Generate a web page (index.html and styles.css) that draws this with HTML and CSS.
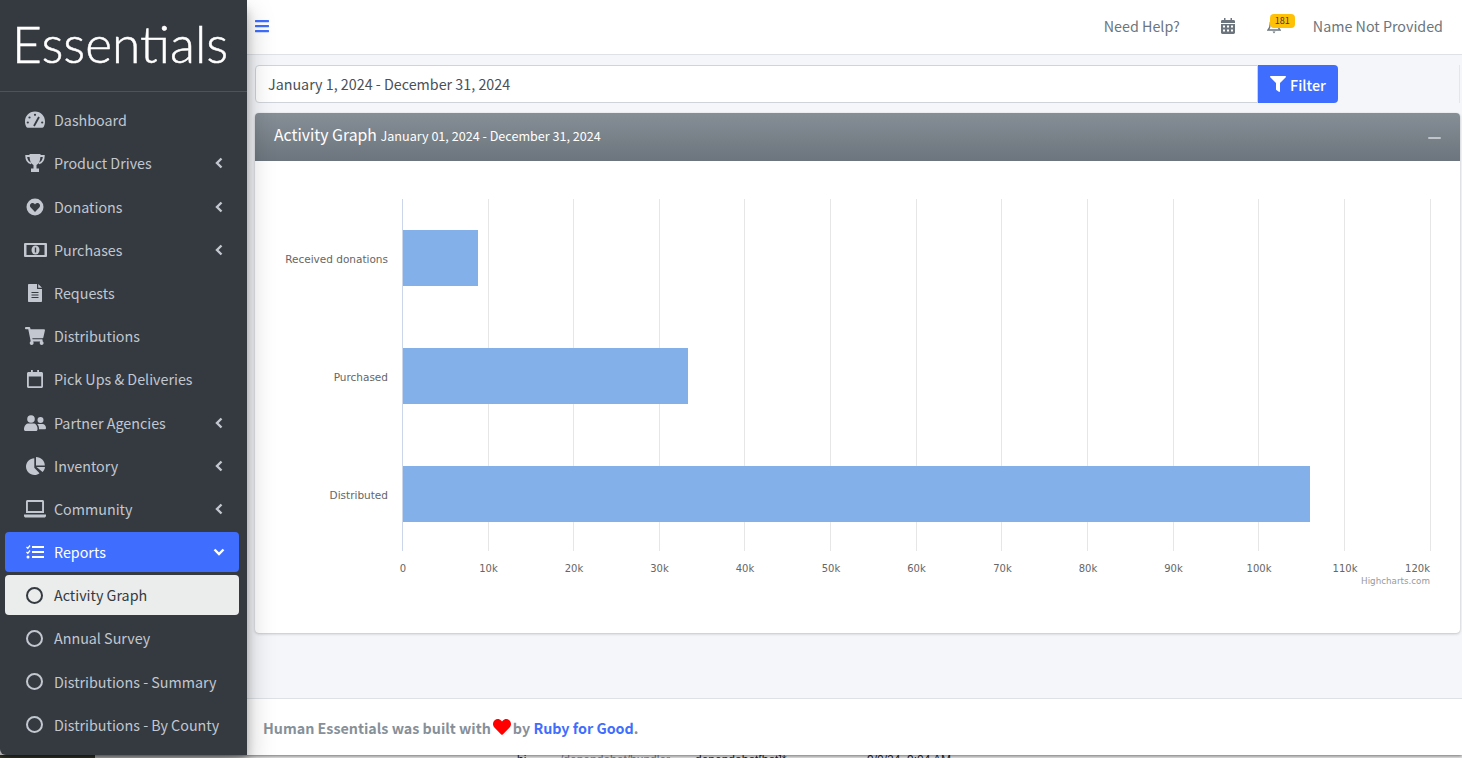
FILE: index.html
```html
<!DOCTYPE html>
<html lang="en">
<head>
<meta charset="UTF-8">
<meta name="viewport" content="width=device-width, initial-scale=1.0">
<title>Activity Graph</title>
<link rel="stylesheet" href="styles.css">
</head>
<body>

<div class="window">
    <aside class="sidebar">
        <div class="brand">Essentials</div>
        <ul class="nav">
            <li class="nav-item">
                <span class="nav-icon"><svg width="22" height="18" viewBox="0 0 22 18"><path fill="currentColor" d="M11 0.5C5 0.5 1 5 1 10.500c0 2 .5 4 1.400 5.500.3.5.8.8 1.400.8h14.400c.6 0 1.100-.3 1.400-.8.9-1.500 1.400-3.500 1.400-5.500C21 5 17 .5 11 .5z"/><g fill="#343a40"><circle cx="11" cy="3.800" r="1.100"/><circle cx="5.500" cy="6.500" r="1.100"/><circle cx="3.800" cy="11.500" r="1.100"/><circle cx="18.200" cy="11.500" r="1.100"/></g><path stroke="#343a40" stroke-width="1.800" d="M10 15l5-9"/></svg></span>
                <span>Dashboard</span>
            </li>
            <li class="nav-item">
                <span class="nav-icon"><svg width="20" height="18" viewBox="0 0 20 18"><path fill="none" stroke="currentColor" stroke-width="1.800" d="M5 2H1.200c0 4 1.500 6.500 5 7.500M15 2h3.800c0 4-1.500 6.500-5 7.500"/><path fill="currentColor" d="M4.500 0h11c0 6-1 9.500-4 11v3.500H14V18H6v-3.500h2.500V11c-3-1.500-4-5-4-11z"/></svg></span>
                <span>Product Drives</span>
                <svg class="chevron" width="8" height="12" viewBox="0 0 8 12"><path d="M6.500 1.500L2 6l4.500 4.500"/></svg>
            </li>
            <li class="nav-item">
                <span class="nav-icon"><svg width="18" height="18" viewBox="0 0 18 18"><circle cx="9" cy="9" r="8.500" fill="currentColor"/><path fill="#343a40" d="M9 14L4.700 9.500C3 7.500 4.500 4.800 6.800 5 8 5.100 8.600 5.800 9 6.500 9.400 5.800 10 5.100 11.200 5c2.300-.2 3.800 2.500 2.100 4.500z"/></svg></span>
                <span>Donations</span>
                <svg class="chevron" width="8" height="12" viewBox="0 0 8 12"><path d="M6.500 1.500L2 6l4.500 4.500"/></svg>
            </li>
            <li class="nav-item">
                <span class="nav-icon"><svg width="23" height="14" viewBox="0 0 23 14"><rect width="23" height="14" rx="1" fill="currentColor"/><rect x="2.500" y="2" width="18" height="10" fill="#343a40"/><ellipse cx="11.500" cy="7" rx="4" ry="4.500" fill="currentColor"/><rect x="10.800" y="4.500" width="1.400" height="5" fill="#343a40"/></svg></span>
                <span>Purchases</span>
                <svg class="chevron" width="8" height="12" viewBox="0 0 8 12"><path d="M6.500 1.500L2 6l4.500 4.500"/></svg>
            </li>
            <li class="nav-item">
                <span class="nav-icon"><svg width="14" height="18" viewBox="0 0 14 18"><path fill="currentColor" d="M1 0h8v4.500c0 .3.200.5.500.5H14v12c0 .6-.4 1-1 1H1c-.6 0-1-.4-1-1V1c0-.6.4-1 1-1zm9.200 0L14 3.800H10.200z"/><path stroke="#343a40" stroke-width="1.200" d="M3.500 8.500h7M3.500 11h7M3.500 13.500h7"/></svg></span>
                <span>Requests</span>
            </li>
            <li class="nav-item">
                <span class="nav-icon"><svg width="20" height="18" viewBox="0 0 576 512"><path fill="currentColor" d="M528.120 301.319l47.273-208C578.806 78.301 567.391 64 551.990 64H159.208l-9.166-44.810C147.758 8.021 137.930 0 126.529 0H24C10.745 0 0 10.745 0 24v16c0 13.255 10.745 24 24 24h69.883l70.248 343.435C147.325 417.100 136 435.222 136 456c0 30.928 25.072 56 56 56s56-25.072 56-56c0-15.674-6.447-29.835-16.824-40h209.647C430.447 426.165 424 440.326 424 456c0 30.928 25.072 56 56 56s56-25.072 56-56c0-22.172-12.888-41.332-31.579-50.405l5.517-24.276c3.413-15.018-8.002-29.319-23.403-29.319H218.117l-6.545-32h293.145c11.206 0 20.920-7.754 23.403-18.681z"/></svg></span>
                <span>Distributions</span>
            </li>
            <li class="nav-item">
                <span class="nav-icon"><svg width="16" height="18" viewBox="0 0 16 18"><path fill="currentColor" d="M1.500 2H4V0h1.800v2h4.400V0H12v2h2.500c.8 0 1.500.7 1.500 1.500v13c0 .8-.7 1.500-1.500 1.500h-13C.7 18 0 17.300 0 16.500v-13C0 2.700.7 2 1.500 2zm.3 4.500v9.500c0 .2.100.3.300.3h11.800c.2 0 .3-.1.300-.3V6.500z"/></svg></span>
                <span>Pick Ups &amp; Deliveries</span>
            </li>
            <li class="nav-item">
                <span class="nav-icon"><svg width="22" height="16" viewBox="0 0 22 16"><g fill="currentColor"><circle cx="7" cy="4" r="3.800"/><path d="M0 14c0-3.500 2.500-5.500 4.500-5.500h5C11.500 8.500 13.500 10.500 13.500 14v.5c0 .8-.7 1.500-1.500 1.500H1.500C.7 16 0 15.300 0 14.500z"/><circle cx="16.500" cy="5" r="3"/><path d="M14.200 9h4.300C20.500 9 22 10.800 22 13c0 .8-.5 1.300-1.300 1.300H15c0-2-.2-3.800-1.800-5.300z"/></g></svg></span>
                <span>Partner Agencies</span>
                <svg class="chevron" width="8" height="12" viewBox="0 0 8 12"><path d="M6.500 1.500L2 6l4.500 4.500"/></svg>
            </li>
            <li class="nav-item">
                <span class="nav-icon"><svg width="19" height="18" viewBox="0 0 19 18"><g fill="currentColor"><path d="M8.300 1.200C3.700 1.500 0 5 0 9.500 0 14.200 3.800 18 8.500 18c2 0 3.700-.7 5-1.800L8.300 10.800z"/><path d="M10 0v8.500h8.800C18.800 3.700 14.900 0 10 0z"/><path d="M10.500 10h8.500c-.2 2-1.100 3.800-2.500 5.100z"/></g></svg></span>
                <span>Inventory</span>
                <svg class="chevron" width="8" height="12" viewBox="0 0 8 12"><path d="M6.500 1.500L2 6l4.500 4.500"/></svg>
            </li>
            <li class="nav-item">
                <span class="nav-icon"><svg width="22" height="18" viewBox="0 0 22 18"><path fill="currentColor" d="M3.500 0h15c.8 0 1.500.7 1.500 1.500V13H2V1.500C2 .7 2.700 0 3.500 0zm.4 2v9h14.200V2zM0 14.500h22v1.200c0 1-.8 1.800-1.800 1.800H1.800C.8 17.500 0 16.700 0 15.700z"/></svg></span>
                <span>Community</span>
                <svg class="chevron" width="8" height="12" viewBox="0 0 8 12"><path d="M6.500 1.500L2 6l4.500 4.500"/></svg>
            </li>
            <li class="nav-item is-open">
                <span class="nav-icon"><svg width="18" height="14" viewBox="0 0 18 14"><path stroke="currentColor" stroke-width="2" d="M6 2h12M6 7h12M6 12h12"/><path fill="none" stroke="currentColor" stroke-width="1.300" d="M.5 2l1.300 1.300L4 .5M.5 7l1.300 1.300L4 5.500"/><circle cx="2" cy="12" r="1.500" fill="currentColor"/></svg></span>
                <span>Reports</span>
                <svg class="chevron" width="12" height="8" viewBox="0 0 12 8"><path d="M1.500 1.500L6 6l4.500-4.500"/></svg>
            </li>
            <li class="nav-item is-current">
                <span class="nav-icon"><span class="ring"></span></span>
                <span>Activity Graph</span>
            </li>
            <li class="nav-item">
                <span class="nav-icon"><span class="ring"></span></span>
                <span>Annual Survey</span>
            </li>
            <li class="nav-item">
                <span class="nav-icon"><span class="ring"></span></span>
                <span>Distributions - Summary</span>
            </li>
            <li class="nav-item">
                <span class="nav-icon"><span class="ring"></span></span>
                <span>Distributions - By County</span>
            </li>
        </ul>
    </aside>

    <div class="main">
        <header class="topbar">
            <svg class="menu-icon" width="14" height="16" viewBox="0 0 448 512"><path fill="currentColor" d="M16 132h416c8.837 0 16-7.163 16-16V76c0-8.837-7.163-16-16-16H16C7.163 60 0 67.163 0 76v40c0 8.837 7.163 16 16 16zm0 160h416c8.837 0 16-7.163 16-16v-40c0-8.837-7.163-16-16-16H16c-8.837 0-16 7.163-16 16v40c0 8.837 7.163 16 16 16zm0 160h416c8.837 0 16-7.163 16-16v-40c0-8.837-7.163-16-16-16H16c-8.837 0-16 7.163-16 16v40c0 8.837 7.163 16 16 16z"/></svg>
            <span class="help">Need Help?</span>
            <svg class="calendar" width="14" height="16" viewBox="0 0 14 16"><path fill="currentColor" d="M3 0h1.500v2h5V0H11v2h1.600c.8 0 1.400.6 1.400 1.400V5H0V3.400C0 2.600.6 2 1.400 2H3zM0 6h14v8.600c0 .8-.6 1.400-1.400 1.400H1.400C.6 16 0 15.400 0 14.600z"/><path fill="#fff" d="M2 7.500h2v2H2zM6 7.500h2v2H6zM10 7.500h2v2h-2zM2 11.500h2v2H2zM6 11.500h2v2H6zM10 11.500h2v2h-2z"/></svg>
            <span class="bell">
                <svg width="14" height="16" viewBox="0 0 14 16"><path fill="none" stroke="#6c757d" stroke-width="1.300" d="M7 1.500C4.500 1.500 3.200 3.500 3.200 6c0 3-1 4.800-2.200 6h12c-1.200-1.200-2.200-3-2.200-6 0-2.500-1.300-4.500-3.800-4.500z"/><path fill="#6c757d" d="M5.500 13.500h3L7 15.500z"/></svg>
                <span class="badge">181</span>
            </span>
            <span class="user">Name Not Provided</span>
        </header>

        <main class="content">
            <div class="filter-row">
                <div class="date-input">January 1, 2024 - December 31, 2024</div>
                <button class="filter-btn">
                    <svg width="16" height="16" viewBox="0 0 512 512"><path fill="currentColor" d="M487.976 0H24.028C2.710 0-8.047 25.866 7.058 40.971L192 225.941V432c0 7.831 3.821 15.170 10.237 19.662l80 55.980C298.020 518.690 320 507.493 320 487.980V225.941l184.947-184.970C520.021 25.896 509.338 0 487.976 0z"/></svg>
                    Filter
                </button>
            </div>

            <section class="card">
                <div class="card-header">
                    <h3 class="card-title">Activity Graph <small>January 01, 2024 - December 31, 2024</small></h3>
                    <span class="collapse-btn"></span>
                </div>
                <svg class="chart" width="1205" height="472" viewBox="0 0 1205 472">
                    <g class="grid">
                        <path d="M233.500 38v352M318.500 38v352M404.500 38v352M489.500 38v352M575.500 38v352M661.500 38v352M746.500 38v352M832.500 38v352M918.500 38v352M1003.500 38v352M1089.500 38v352M1175.500 38v352"/>
                    </g>
                    <path class="axis" d="M147.500 38v352"/>
                    <rect class="bar" x="148" y="69" width="75" height="56"/>
                    <rect class="bar" x="148" y="187" width="285" height="56"/>
                    <rect class="bar" x="148" y="305" width="907" height="56"/>
                    <g class="cat-labels">
                        <text x="133" y="102">Received donations</text>
                        <text x="133" y="220">Purchased</text>
                        <text x="133" y="338">Distributed</text>
                    </g>
                    <g class="val-labels">
                        <text x="148" y="411">0</text>
                        <text x="233.500" y="411">10k</text>
                        <text x="319" y="411">20k</text>
                        <text x="404.500" y="411">30k</text>
                        <text x="490" y="411">40k</text>
                        <text x="576" y="411">50k</text>
                        <text x="661.500" y="411">60k</text>
                        <text x="747.500" y="411">70k</text>
                        <text x="833" y="411">80k</text>
                        <text x="918.500" y="411">90k</text>
                        <text x="1004" y="411">100k</text>
                        <text x="1090" y="411">110k</text>
                        <text x="1175" y="411">120k</text>
                    </g>
                    <text class="credit" x="1175" y="423">Highcharts.com</text>
                </svg>
            </section>
        </main>

        <footer class="footer">
            <strong>Human Essentials was built with</strong>
            <svg class="heart" width="18" height="18" viewBox="0 0 512 512"><path fill="#f00" d="M462.300 62.600C407.500 15.900 326 24.300 275.700 76.200L256 96.500l-19.700-20.300C186.100 24.300 104.500 15.900 49.700 62.600c-62.800 53.600-66.100 149.800-9.900 207.900l193.500 199.800c12.500 12.900 32.800 12.900 45.300 0l193.500-199.800c56.300-58.100 53-154.300-9.800-207.900z"/></svg>
            <strong>by <a href="#">Ruby for Good</a>.</strong>
        </footer>
    </div>
</div>

<div class="behind">
    <span>bi</span>
    <span class="muted">/dependabot/bundler</span>
    <span>dependabot[bot]*</span>
    <span>9/0/24, 9:04 AM</span>
</div>

</body>
</html>
```

FILE: styles.css
```css
* {
    box-sizing: border-box;
}
html, body {
    height: 100%;
}
body {
    margin: 0;
    overflow: hidden;
    font-family: "Noto Sans CJK KR", "Noto Sans", sans-serif;
    font-size: 14.3px;
    color: #343a40;
    background-color: #ddd;
}
.window {
    display: flex;
    height: 755px;
    box-shadow: 0 1px 3px rgba(0, 0, 0, 0.5);
    position: relative;
}

/* sidebar */
.sidebar {
    width: 247px;
    flex-shrink: 0;
    background-color: #343a40;
    color: #c2c7d0;
    border-bottom-left-radius: 6px;
    box-shadow: 0 14px 28px rgba(0, 0, 0, 0.25), 0 10px 10px rgba(0, 0, 0, 0.22);
    position: relative;
    z-index: 2;
}
.brand {
    height: 92px;
    padding: 10px 0 0 12px;
    border-bottom: 1px solid #4b545c;
    font-family: "Lato", sans-serif;
    font-weight: 300;
    font-size: 51.5px;
    line-height: 66px;
    color: #fff;
    -webkit-text-stroke: 0.5px #fff;
}
.nav {
    list-style: none;
    margin: 0;
    padding: 8.2px 8px 0 5px;
    display: flex;
    flex-direction: column;
    gap: 3.2px;
}
.nav-item {
    display: flex;
    align-items: center;
    height: 40px;
    padding-left: 17px;
    border-radius: 4px;
    line-height: 24px;
}
.nav-icon {
    width: 26px;
    margin-right: 6px;
    display: flex;
    align-items: center;
    justify-content: center;
    flex-shrink: 0;
}
.chevron {
    margin-left: auto;
    margin-right: 16px;
    fill: none;
    stroke: currentColor;
    stroke-width: 2.4;
}
.is-open {
    background-color: #3f6efe;
    color: #fff;
}
.is-open .chevron {
    margin-right: 14px;
}
.is-current {
    background-color: #ebecec;
    color: #343a40;
}
.ring {
    width: 17px;
    height: 17px;
    margin-left: -1px;
    border: 2px solid currentColor;
    border-radius: 50%;
}

/* main column */
.main {
    flex: 1;
    min-width: 0;
    display: flex;
    flex-direction: column;
    background-color: #f4f6f9;
}
.topbar {
    height: 55px;
    flex-shrink: 0;
    display: flex;
    align-items: center;
    padding: 0 19px 3px 8px;
    background-color: #fff;
    border-bottom: 1px solid #dee2e6;
    color: #6c757d;
}
.menu-icon {
    color: #3f6efe;
}
.help {
    margin-left: auto;
}
.calendar {
    margin-left: 41px;
}
.bell {
    margin-left: 32px;
    position: relative;
    display: flex;
}
.badge {
    position: absolute;
    top: -4px;
    left: 3px;
    padding: 0 5px;
    height: 14px;
    border-radius: 4px;
    background-color: #ffc107;
    color: #343a40;
    font-size: 9px;
    line-height: 14px;
}
.user {
    margin-left: 32px;
}
.content {
    flex: 1;
    padding: 10px 2px 0 8px;
}
.filter-row {
    display: flex;
    height: 38px;
    border-right: 1px solid #e3e6ea;
}
.date-input {
    flex: 0 0 1003px;
    padding: 0 12px;
    border: 1px solid #ced4da;
    border-radius: 4px 0 0 4px;
    background-color: #fff;
    color: #495057;
    line-height: 36px;
}
.filter-btn {
    width: 80px;
    display: flex;
    align-items: center;
    justify-content: center;
    gap: 4px;
    padding: 0;
    border: none;
    border-radius: 0 4px 4px 0;
    background-color: #3f6efe;
    color: #fff;
    font: inherit;
    font-weight: 500;
}
.card {
    margin-top: 10px;
    height: 520px;
    border-radius: 4px;
    background-color: #fff;
    box-shadow: 0 0 1px rgba(0, 0, 0, 0.125), 0 1px 3px rgba(0, 0, 0, 0.2);
    overflow: hidden;
}
.card-header {
    height: 48px;
    display: flex;
    align-items: center;
    justify-content: space-between;
    padding: 0 19px 3px 19px;
    background: linear-gradient(#868e96, #6c757d);
    color: #fff;
}
.card-title {
    margin: 0;
    font-size: 15.8px;
    font-weight: 400;
    line-height: 24px;
}
.card-title small {
    font-size: 12.6px;
}
.collapse-btn {
    width: 13px;
    height: 2px;
    margin-top: 4px;
    background-color: #c0c5ca;
    border-radius: 1px;
}
.chart {
    display: block;
}
.grid path {
    stroke: #e6e6e6;
    fill: none;
}
.axis {
    stroke: #ccd6eb;
    fill: none;
}
.bar {
    fill: #84b0ea;
}
.chart text {
    font-family: "DejaVu Sans", sans-serif;
    font-size: 10px;
    fill: #666;
}
.chart .cat-labels text {
    font-size: 10.5px;
    text-anchor: end;
}
.val-labels text {
    text-anchor: middle;
}
.val-labels text:last-child {
    text-anchor: end;
}
.chart .credit {
    font-size: 8.75px;
    fill: #999;
    text-anchor: end;
}
.footer {
    height: 57px;
    flex-shrink: 0;
    display: flex;
    align-items: center;
    padding: 0 16px;
    background-color: #fff;
    border-top: 1px solid #dee2e6;
    color: #869099;
}
.footer a {
    color: #3f6efe;
    text-decoration: none;
}
.heart {
    margin: 0 2px;
}

/* what shows under the browser window */
.behind {
    height: 3px;
    display: grid;
    grid-template-columns: 43px 135px 172px auto;
    padding-left: 517px;
    overflow: hidden;
    background: linear-gradient(to right, #3f4233 95px, #e4e4e4 95px);
    font-family: "Liberation Sans", sans-serif;
    font-size: 12px;
    line-height: 10px;
    color: #222;
    white-space: nowrap;
}
.muted {
    color: #778;
}
```
